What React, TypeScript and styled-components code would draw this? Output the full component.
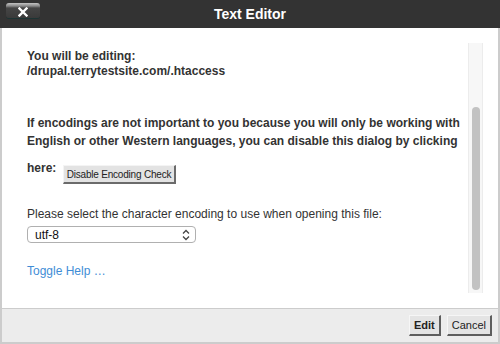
import styled, { createGlobalStyle } from "styled-components";

const GlobalStyle = createGlobalStyle`
  html, body {
    margin: 0;
    padding: 0;
    background: #ffffff;
  }
  body {
    font-family: "Liberation Sans", Arial, sans-serif;
  }
`;

export default function App() {
  return (
    <>
      <GlobalStyle />
      <Dialog>
        <TitleBar>
          <CloseButton aria-label="Close">
            <svg width="10" height="10" viewBox="0 0 10 10">
              <path
                d="M1.5 1.5 L8.5 8.5 M8.5 1.5 L1.5 8.5"
                stroke="#fff"
                strokeWidth="2.4"
                strokeLinecap="square"
              />
            </svg>
          </CloseButton>
          <Title>Text Editor</Title>
        </TitleBar>
        <Frame>
          <Body>
            <Content>
              <Editing>
                You will be editing:
                <br />
                /drupal.terrytestsite.com/.htaccess
              </Editing>
              <Notice>
                If encodings are not important to you because you will only be
                working with English or other Western languages, you can disable
                this dialog by clicking here:{" "}
                <SmallButton>Disable Encoding Check</SmallButton>
              </Notice>
              <Label>
                Please select the character encoding to use when opening this
                file:
              </Label>
              <SelectBox>
                <span>utf-8</span>
                <svg width="8" height="12" viewBox="0 0 8 12">
                  <path
                    d="M1 4.5 L4 1.5 L7 4.5 M1 7.5 L4 10.5 L7 7.5"
                    fill="none"
                    stroke="#444"
                    strokeWidth="1.3"
                  />
                </svg>
              </SelectBox>
              <HelpLink>Toggle Help …</HelpLink>
            </Content>
            <ScrollTrack>
              <ScrollThumb />
            </ScrollTrack>
          </Body>
          <Footer>
            <FooterButton $primary>Edit</FooterButton>
            <FooterButton>Cancel</FooterButton>
          </Footer>
        </Frame>
      </Dialog>
    </>
  );
}

const Dialog = styled.div`
  width: 500px;
  height: 344px;
  display: flex;
  flex-direction: column;
  color: #333;
`;

const TitleBar = styled.div`
  height: 28px;
  background: #333333;
  display: grid;
  grid-template-columns: 1fr auto 1fr;
  align-items: center;
  padding: 0 6px;
  box-sizing: border-box;
`;

const CloseButton = styled.button`
  justify-self: start;
  align-self: start;
  margin-top: 3px;
  width: 34px;
  height: 15px;
  padding: 0;
  border: none;
  border-radius: 3px;
  background: linear-gradient(#c4c4c4 0, #8a8a8a 3px, #454545 5px, #3a3a3a 100%);
  box-shadow: 0 1px 0 #1d3434;
  display: flex;
  align-items: center;
  justify-content: center;
  padding-top: 2px;
  box-sizing: border-box;
`;

const Title = styled.div`
  color: #fff;
  font-weight: bold;
  font-size: 14px;
`;

const Frame = styled.div`
  flex: 1;
  display: flex;
  flex-direction: column;
  border: 2px solid #cccccc;
  border-top: none;
`;

const Body = styled.div`
  flex: 1;
  display: flex;
  background: #fff;
  padding: 15px 15px 15px 25px;
`;

const Content = styled.div`
  flex: 1;
  font-size: 12px;
  padding-top: 6px;
`;

const Editing = styled.div`
  font-weight: bold;
  line-height: 15px;
`;

const Notice = styled.p`
  margin: 35px 0 0;
  font-weight: bold;
  line-height: 18px;
  width: 440px;
`;

const SmallButton = styled.button`
  display: inline-block;
  vertical-align: -6px;
  margin: 15px 0 0 3px;
  padding: 0 3px;
  height: 19px;
  background: #e3e3e3;
  border: 1px solid #f4f4f4;
  border-right: 2px solid #6b6b6b;
  border-bottom: 2px solid #6b6b6b;
  font-family: "Liberation Sans", Arial, sans-serif;
  font-size: 10px;
  letter-spacing: -0.2px;
  color: #222;
`;

const Label = styled.div`
  margin-top: 23px;
  line-height: 15px;
`;

const SelectBox = styled.div`
  margin-top: 4px;
  width: 169px;
  height: 17px;
  box-sizing: border-box;
  border: 1px solid #b0b0b0;
  border-radius: 4px;
  display: flex;
  align-items: center;
  justify-content: space-between;
  padding: 0 5px 0 7px;
  font-size: 12px;
  color: #111;
`;

const HelpLink = styled.div`
  margin-top: 21px;
  line-height: 15px;
  color: #3f8dd6;
`;

const ScrollTrack = styled.div`
  width: 15px;
  box-sizing: border-box;
  background: #f7f7f7;
  border-left: 1px solid #ececec;
  border-right: 1px solid #ececec;
  display: flex;
  flex-direction: column;
  justify-content: flex-end;
  padding: 0 2px 3px 3px;
`;

const ScrollThumb = styled.div`
  height: 183px;
  border-radius: 4px;
  background: #c2c2c2;
`;

const Footer = styled.div`
  height: 33px;
  border-top: 1px solid #cccccc;
  background: #ececec;
  display: flex;
  align-items: center;
  justify-content: flex-end;
  gap: 6px;
  padding-right: 6px;
`;

const FooterButton = styled.button<{ $primary?: boolean }>`
  height: 21px;
  padding: 0 4px;
  background: #e4e4e4;
  border: 1px solid #f6f6f6;
  border-right: 2px solid #5e5e5e;
  border-bottom: 2px solid #5e5e5e;
  font-family: "Liberation Sans", Arial, sans-serif;
  font-size: 11px;
  font-weight: ${({ $primary }) => ($primary ? "bold" : "normal")};
  color: #222;
`;
